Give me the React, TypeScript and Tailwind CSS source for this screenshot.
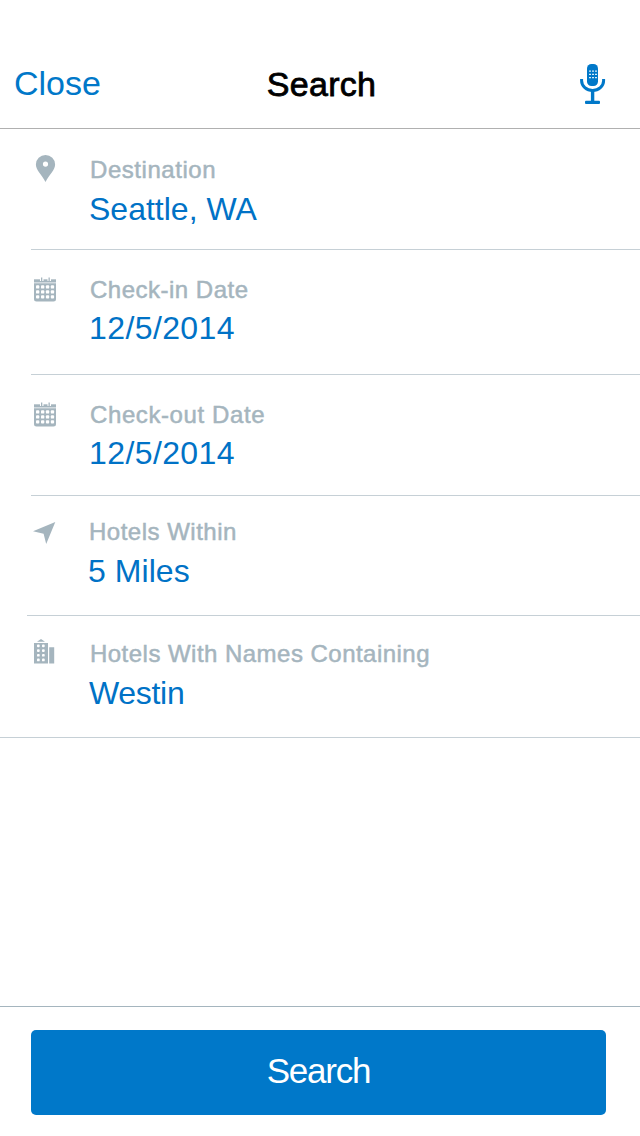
import type { ReactNode } from "react";

function MicIcon() {
  return (
    <svg width="26" height="40" viewBox="0 0 26 40" fill="none">
      <rect x="7" y="0" width="11" height="22" rx="4.5" fill="#0078c9" />
      <path d="M1.6 15v1.8a11 9.6 0 0 0 22 0V15" stroke="#0078c9" strokeWidth="3" />
      <path d="M12.6 26v11" stroke="#0078c9" strokeWidth="3.4" />
      <rect x="5" y="36.7" width="15" height="3.2" rx="1" fill="#0078c9" />
      <path
        d="M9 7.2h2m1 0h2m1 0h2M9 10.4h2m1 0h2m1 0h2M9 13.6h2m1 0h2m1 0h2"
        stroke="#d8ecf8"
        strokeWidth="1.3"
      />
    </svg>
  );
}

function PinIcon() {
  return (
    <svg width="26" height="28" viewBox="0 0 26 28">
      <path
        fillRule="evenodd"
        fill="#a5b5be"
        d="M12.5 0A9.600 9.400 0 0 0 2.900 9.400c0 5.500 5.600 9.900 9.600 17.500C16.500 19.300 22.100 14.900 22.100 9.400A9.600 9.400 0 0 0 12.500 0Zm0 6.500a2.600 2.600 0 1 1 0 5.200a2.600 2.600 0 0 1 0-5.200Z"
      />
    </svg>
  );
}

function CalendarIcon() {
  const columns = [3, 8, 12.9, 17.8];
  const rows = [8.3, 13.3, 18.2];
  return (
    <svg width="26" height="28" viewBox="0 0 26 28">
      <path d="M1 2.300h22v3.200H1z" fill="#a5b5be" />
      <path d="M7 0h3.500v4H7zM14.500 0h3.500v4h-3.500z" fill="#fff" />
      <path d="M8 0.500h1.300v3.500H8zM15.500 0.500h1.300v3.500h-1.300z" fill="#a5b5be" />
      <path d="M1 6.200h22V22a2.500 2.500 0 0 1-2.500 2.500h-17A2.500 2.500 0 0 1 1 22z" fill="#a5b5be" />
      {columns.map((x) =>
        rows.map((y) => (
          <rect key={`${x}-${y}`} x={x} y={y} width="3.300" height="3.300" rx="0.900" fill="#fff" />
        )),
      )}
    </svg>
  );
}

function ArrowIcon() {
  return (
    <svg width="26" height="28" viewBox="0 0 26 28">
      <path d="M22.300 0 13.200 22 10.600 11.800 0 9.300z" fill="#a5b5be" />
    </svg>
  );
}

function BuildingIcon() {
  return (
    <svg width="26" height="28" viewBox="0 0 26 28">
      <path d="M8 0 12 2.700H4zM1 3.900h14v20.500H1zM16.200 8.300h5v16.100h-5z" fill="#a5b5be" />
      {[0, 1, 2, 3].map((y) =>
        [4, 9].map((x) => (
          <rect key={`${x}-${y}`} x={x} y={5.500 + y * 4.700} width="2.700" height="2.700" rx="0.900" fill="#fff" />
        )),
      )}
    </svg>
  );
}

type Field = {
  label: string;
  value: string;
  icon: ReactNode;
  row: string;
  iconBox: string;
  text: string;
  labelClass: string;
  valueClass: string;
  line: string;
};

const fields: Field[] = [
  {
    label: "Destination",
    value: "Seattle, WA",
    icon: <PinIcon />,
    row: "h-[121px]",
    iconBox: "pt-[26px]",
    text: "pt-[27px] pl-[30px]",
    labelClass: "tracking-[0.55px]",
    valueClass: "mt-[5px] tracking-[0px]",
    line: "ml-[31px]",
  },
  {
    label: "Check-in Date",
    value: "12/5/2014",
    icon: <CalendarIcon />,
    row: "h-[125px]",
    iconBox: "pt-[27px]",
    text: "pt-[26px] pl-[30px]",
    labelClass: "tracking-[0.5px]",
    valueClass: "mt-1 tracking-[0.4px]",
    line: "ml-[31px]",
  },
  {
    label: "Check-out Date",
    value: "12/5/2014",
    icon: <CalendarIcon />,
    row: "h-[121px]",
    iconBox: "pt-[27px]",
    text: "pt-[26px] pl-[30px]",
    labelClass: "tracking-[0.6px]",
    valueClass: "mt-1 tracking-[0.4px]",
    line: "ml-[31px]",
  },
  {
    label: "Hotels Within",
    value: "5 Miles",
    icon: <ArrowIcon />,
    row: "h-[120px]",
    iconBox: "pt-[26px]",
    text: "pt-[22px] pl-[29px]",
    labelClass: "tracking-[0.5px]",
    valueClass: "mt-[5px] tracking-[0.05px]",
    line: "ml-[27px]",
  },
  {
    label: "Hotels With Names Containing",
    value: "Westin",
    icon: <BuildingIcon />,
    row: "h-[122px]",
    iconBox: "pt-[23px]",
    text: "pt-[24px] pl-[30px]",
    labelClass: "tracking-[0.47px]",
    valueClass: "mt-[5px] tracking-[-0.3px]",
    line: "",
  },
];

function FieldRow({ field }: { field: Field }) {
  return (
    <div className={`flex flex-col ${field.row}`}>
      <div className="flex flex-1 pl-[33px]">
        <div className={`w-[26px] shrink-0 ${field.iconBox}`}>{field.icon}</div>
        <div className={`whitespace-nowrap ${field.text}`}>
          <div
            className={`pl-px text-2xl leading-7 text-[#a5b5be] [-webkit-text-stroke:0.5px_#a5b5be] ${field.labelClass}`}
          >
            {field.label}
          </div>
          <div className={`text-[32px] leading-10 text-[#0072c6] ${field.valueClass}`}>{field.value}</div>
        </div>
      </div>
      <div className={`h-px shrink-0 bg-[#c6d0d6] ${field.line}`} />
    </div>
  );
}

export default function App() {
  return (
    <div className="flex h-[1136px] w-[640px] flex-col overflow-hidden bg-white font-['Liberation_Sans',Arial,sans-serif]">
      <header className="grid h-[129px] shrink-0 grid-cols-[1fr_auto_1fr] items-start border-b border-[#b0b0b0] pt-[63px] pr-[34px] pl-[14px]">
        <button className="justify-self-start text-[34px] leading-10 tracking-[0px] text-[#0078c9]">Close</button>
        <h1 className="mt-px ml-[23px] text-[34px] leading-10 tracking-[0.3px] text-black [-webkit-text-stroke:0.8px_#000]">
          Search
        </h1>
        <button className="mt-px justify-self-end" aria-label="Voice search">
          <MicIcon />
        </button>
      </header>
      <main className="flex-1">
        {fields.map((field) => (
          <FieldRow key={field.label} field={field} />
        ))}
      </main>
      <footer className="h-[130px] shrink-0 border-t border-[#a5b5be] pt-[23px] pr-[34px] pl-[31px]">
        <button className="flex h-[85px] w-full items-center justify-center rounded-[5px] bg-[#0078c9] pb-[3px] text-[35px] leading-10 tracking-[-1.2px] text-white">
          Search
        </button>
      </footer>
    </div>
  );
}
